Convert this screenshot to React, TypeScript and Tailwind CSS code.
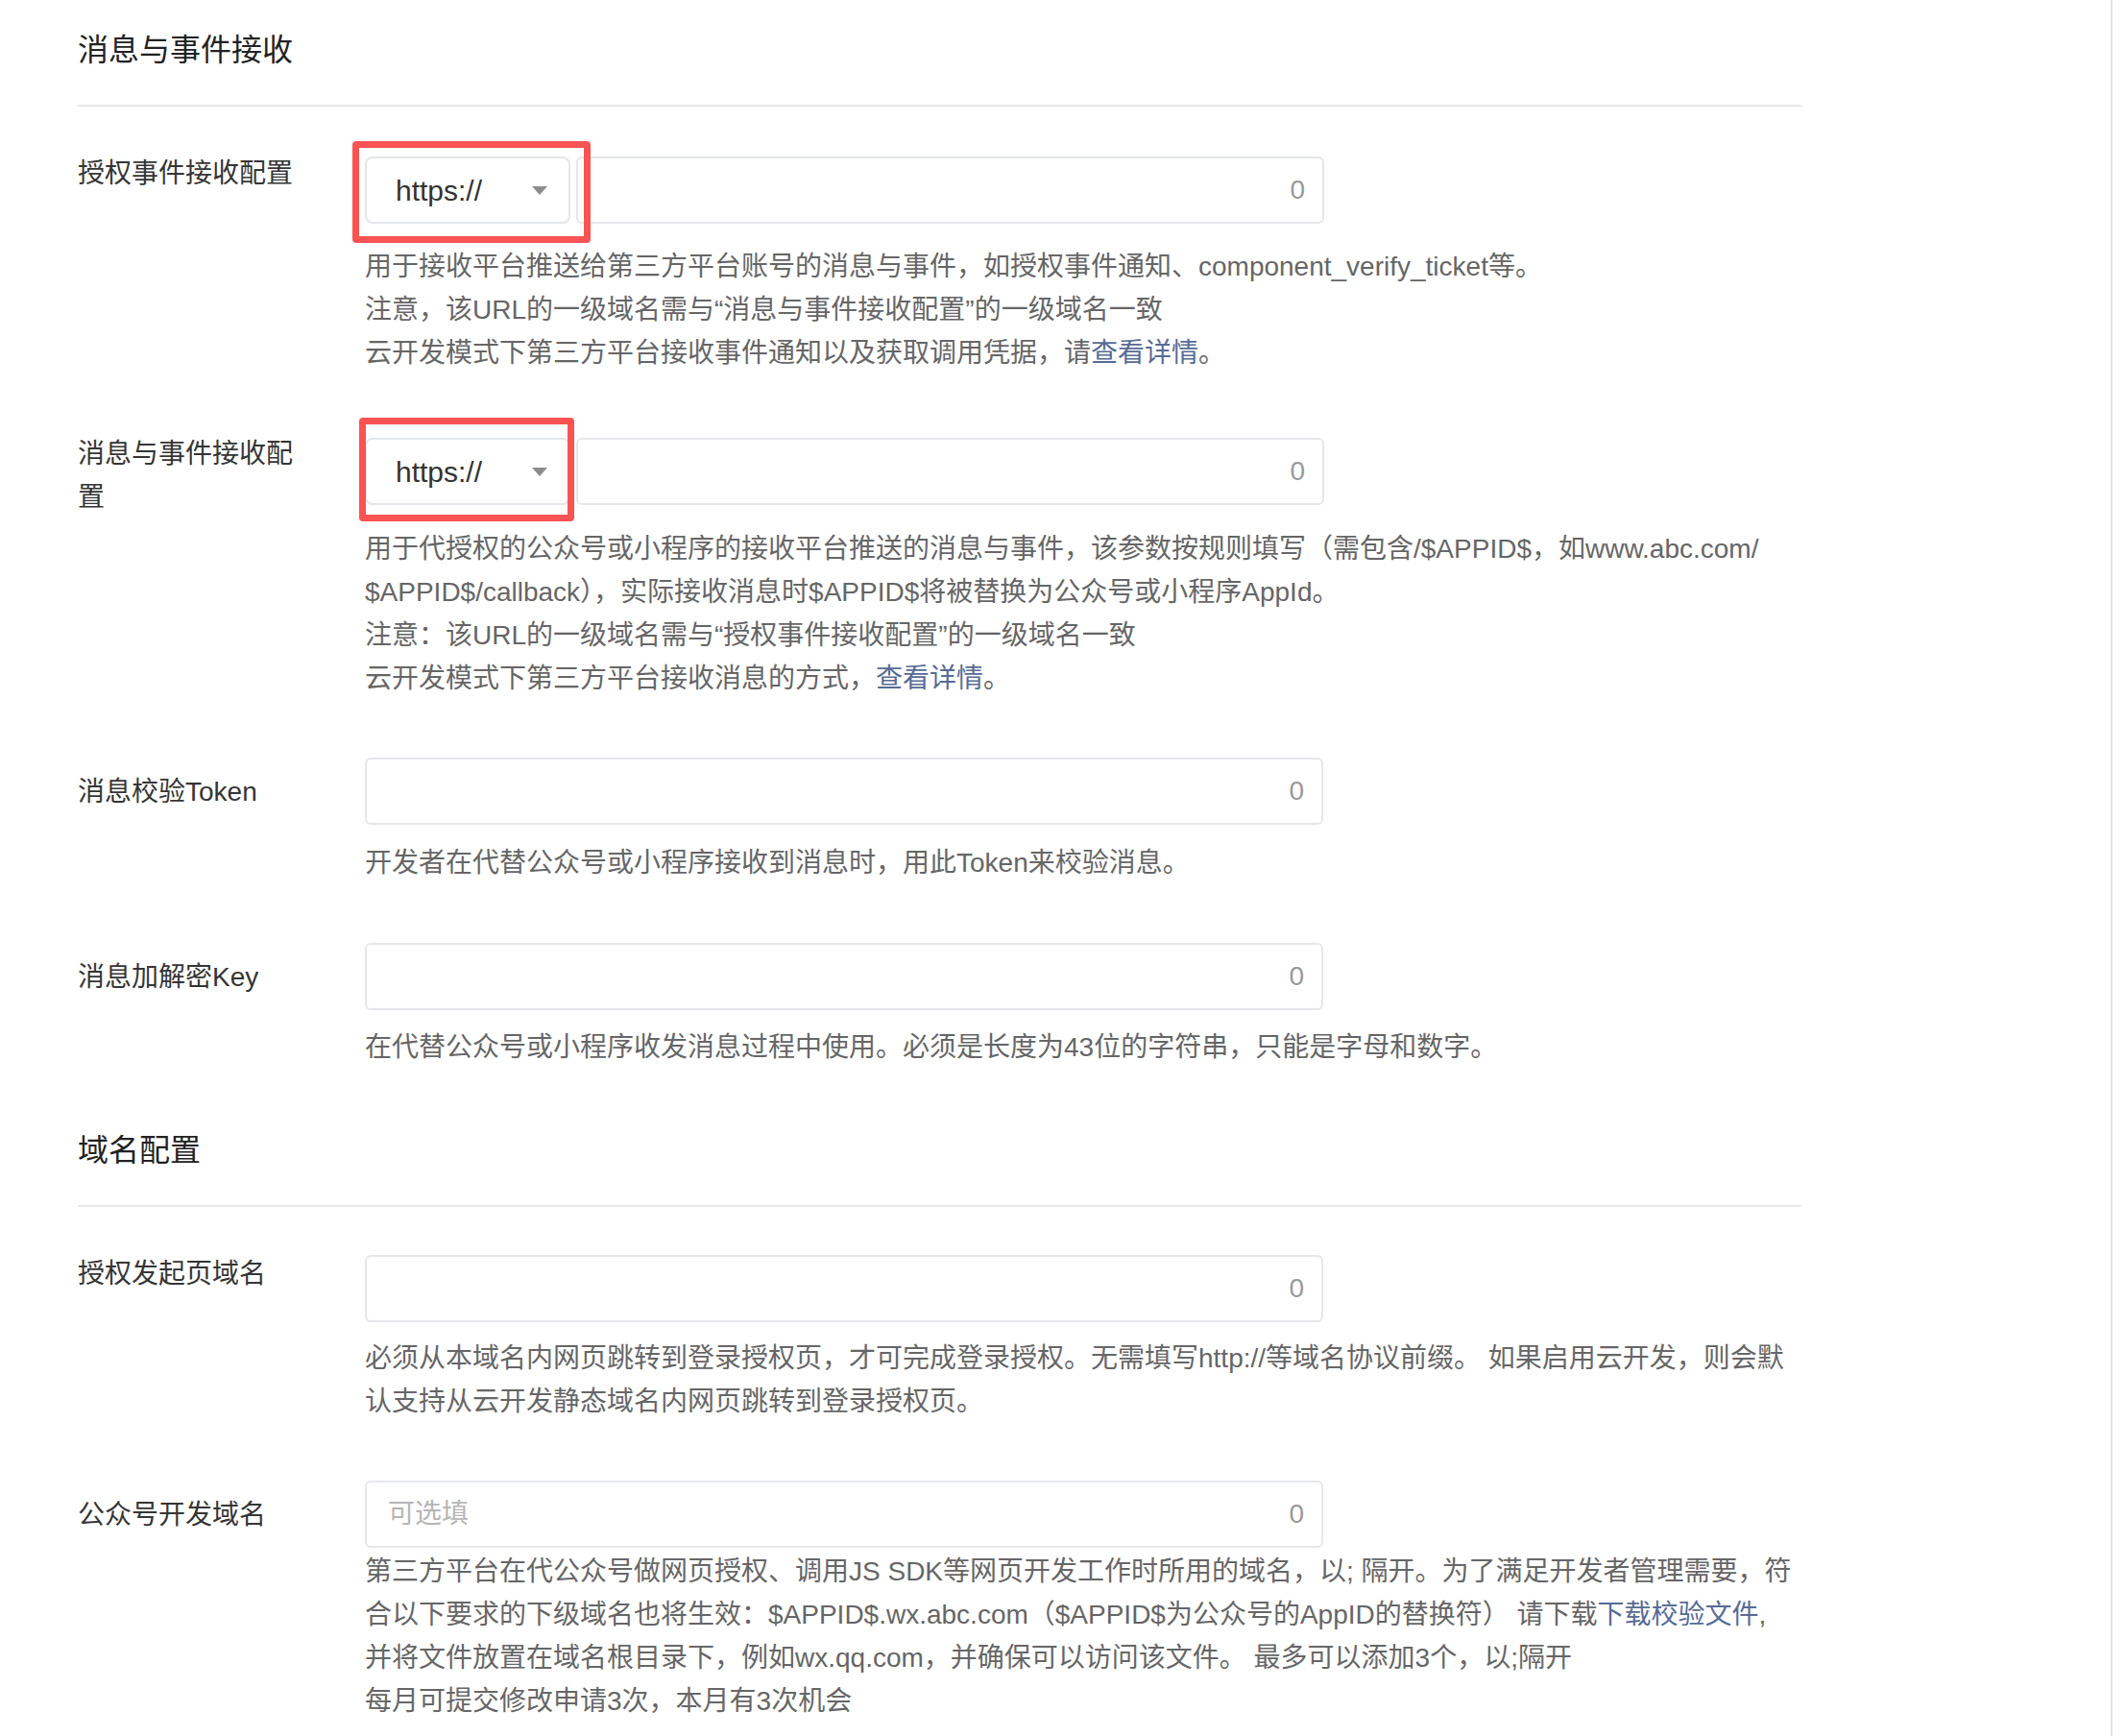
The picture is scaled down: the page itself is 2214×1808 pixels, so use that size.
import type { ReactNode } from "react";

const LINK = "text-[#576b95]";

function SectionTitle({ children, mt }: { children: ReactNode; mt: string }) {
  return (
    <div className={`${mt} w-[1795px] border-b-2 border-[#e7e8ea] pb-[34px]`}>
      <h2 className="text-[32px] leading-[45px] text-[#222]">{children}</h2>
    </div>
  );
}

function Field({
  label,
  labelMt,
  inputMt,
  descMt,
  rowMt,
  input,
  desc,
}: {
  label: string;
  labelMt: string;
  inputMt: string;
  descMt: string;
  rowMt: string;
  input: ReactNode;
  desc: ReactNode;
}) {
  return (
    <div className={`${rowMt} flex`}>
      <div className={`${labelMt} w-[299px] shrink-0 pr-[60px] text-[28px] leading-[45px] text-[#353535]`}>
        {label}
      </div>
      <div className="flex flex-col">
        <div className={inputMt}>{input}</div>
        <div className={`${descMt} whitespace-nowrap text-[28px] leading-[45px] text-[#666]`}>{desc}</div>
      </div>
    </div>
  );
}

function TextBox({ width, placeholder }: { width: string; placeholder?: string }) {
  return (
    <div
      className={`${width} flex h-[70px] items-center justify-between rounded-[6px] border-2 border-[#e5e7ea] bg-white pl-[22px] pr-[18px] text-[28px]`}
    >
      <span className="text-[#b5b5b5]">{placeholder}</span>
      <span className="text-[#999]">0</span>
    </div>
  );
}

function UrlInput({ box }: { box: string }) {
  return (
    <div className="relative flex gap-[6px]">
      <div className="flex h-[70px] w-[214px] items-center justify-between rounded-[8px] border-2 border-[#e3e6ea] bg-white pl-[30px] pr-[22px]">
        <span className="text-[30px] text-[#333]">https://</span>
        <svg width="16" height="9" viewBox="0 0 16 9">
          <path d="M0 0h16L8 9z" fill="#8c8c8c" />
        </svg>
      </div>
      <TextBox width="w-[779px]" />
      {/* red annotation frame */}
      <div className={`absolute ${box} rounded-[4px] border-[7px] border-[#f95353]`} />
    </div>
  );
}

export default function App() {
  return (
    <div className="flex h-[1808px] overflow-hidden bg-white font-['Liberation_Sans','Noto_Sans_CJK_SC',sans-serif]">
      <main className="w-[2198px] shrink-0 pl-[81px] pt-[30px]">
        <SectionTitle mt="mt-0">消息与事件接收</SectionTitle>

        <Field
          rowMt="mt-[47px]"
          label="授权事件接收配置"
          labelMt="mt-0"
          inputMt="mt-[5px]"
          descMt="mt-[22px]"
          input={<UrlInput box="-left-[13px] -top-[16px] h-[106px] w-[248px]" />}
          desc={
            <>
              用于接收平台推送给第三方平台账号的消息与事件，如授权事件通知、component_verify_ticket等。
              <br />
              注意，该URL的一级域名需与“消息与事件接收配置”的一级域名一致
              <br />
              云开发模式下第三方平台接收事件通知以及获取调用凭据，请<span className={LINK}>查看详情</span>。
            </>
          }
        />

        <Field
          rowMt="mt-[60px]"
          label="消息与事件接收配置"
          labelMt="mt-0"
          inputMt="mt-[6px]"
          descMt="mt-[23px]"
          input={<UrlInput box="-left-[6px] -top-[21px] h-[108px] w-[224px]" />}
          desc={
            <>
              用于代授权的公众号或小程序的接收平台推送的消息与事件，该参数按规则填写（需包含/$APPID$，如www.abc.com/
              <br />
              $APPID$/callback），实际接收消息时$APPID$将被替换为公众号或小程序AppId。
              <br />
              注意：该URL的一级域名需与“授权事件接收配置”的一级域名一致
              <br />
              云开发模式下第三方平台接收消息的方式，<span className={LINK}>查看详情</span>。
            </>
          }
        />

        <Field
          rowMt="mt-[60px]"
          label="消息校验Token"
          labelMt="mt-[13px]"
          inputMt="mt-0"
          descMt="mt-[17px]"
          input={<TextBox width="w-[998px]" />}
          desc={<>开发者在代替公众号或小程序接收到消息时，用此Token来校验消息。</>}
        />

        <Field
          rowMt="mt-[61px]"
          label="消息加解密Key"
          labelMt="mt-[13px]"
          inputMt="mt-0"
          descMt="mt-[16px]"
          input={<TextBox width="w-[998px]" />}
          desc={<>在代替公众号或小程序收发消息过程中使用。必须是长度为43位的字符串，只能是字母和数字。</>}
        />

        <SectionTitle mt="mt-[63px]">域名配置</SectionTitle>

        <Field
          rowMt="mt-[47px]"
          label="授权发起页域名"
          labelMt="mt-0"
          inputMt="mt-[3px]"
          descMt="mt-[15px]"
          input={<TextBox width="w-[998px]" />}
          desc={
            <>
              必须从本域名内网页跳转到登录授权页，才可完成登录授权。无需填写http://等域名协议前缀。 如果启用云开发，则会默
              <br />
              认支持从云开发静态域名内网页跳转到登录授权页。
            </>
          }
        />

        <Field
          rowMt="mt-[60px]"
          label="公众号开发域名"
          labelMt="mt-[13px]"
          inputMt="mt-0"
          descMt="mt-[2px]"
          input={<TextBox width="w-[998px]" placeholder="可选填" />}
          desc={
            <>
              第三方平台在代公众号做网页授权、调用JS SDK等网页开发工作时所用的域名，以; 隔开。为了满足开发者管理需要，符
              <br />
              合以下要求的下级域名也将生效：$APPID$.wx.abc.com（$APPID$为公众号的AppID的替换符） 请下载
              <span className={LINK}>下载校验文件</span>,
              <br />
              并将文件放置在域名根目录下，例如wx.qq.com，并确保可以访问该文件。 最多可以添加3个，以;隔开
              <br />
              每月可提交修改申请3次，本月有3次机会
            </>
          }
        />
      </main>
      <div className="w-[2px] shrink-0 bg-[#e2e2e2]" />
      <div className="flex-1" />
    </div>
  );
}
